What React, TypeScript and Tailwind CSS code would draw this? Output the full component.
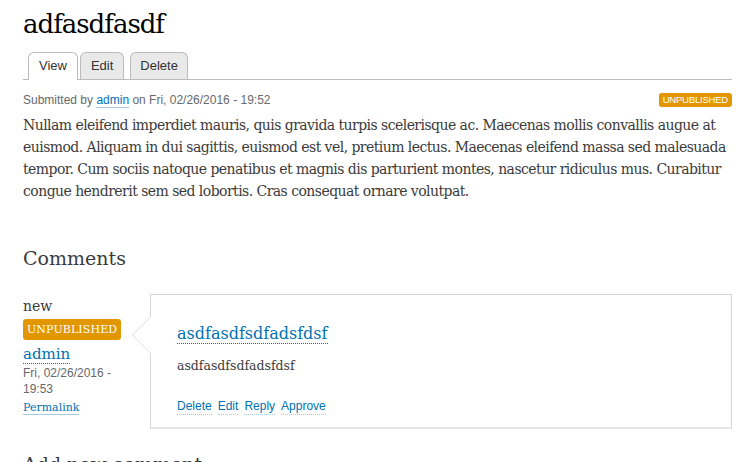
export default function App() {
  const serif = "font-['DejaVu_Serif',serif]";
  const sans = "font-['Liberation_Sans',Arial,sans-serif]";
  return (
    <div className={`min-h-[462px] bg-white pl-[23px] pr-[10px] pt-[4px] text-[#3b3b3b] ${serif}`}>
      <h1 className="text-[26px] leading-[40px] text-[#000] tracking-[-1px]">adfasdfasdf</h1>

      {/* Tabs */}
      <div className={`mt-[8px] flex items-end border-b border-[#bbb] pl-[5px] ${sans} text-[13px]`}>
        <span className="-mb-px rounded-t-[6px] border border-b-0 border-[#bbb] bg-white px-[10px] pb-[4px] pt-[3px] leading-[20px] text-[#333]">View</span>
        <span className="ml-[2px] rounded-t-[6px] border border-b-0 border-[#bbb] bg-[#e9e9e9] px-[10px] pb-[3px] pt-[3px] leading-[20px] text-[#333]">Edit</span>
        <span className="ml-[6px] rounded-t-[6px] border border-b-0 border-[#bbb] bg-[#e9e9e9] px-[9px] pb-[3px] pt-[3px] leading-[20px] text-[#333]">Delete</span>
      </div>

      {/* Meta */}
      <div className={`mt-[11px] flex items-center justify-between ${sans} text-[12px] text-[#68696b]`}>
        <span>
          Submitted by <a className="border-b border-[#a6c9e2] text-[#0071b3]">admin</a> on Fri, 02/26/2016 - 19:52
        </span>
        <span className="rounded-[3px] bg-[#e29700] px-[4px] py-[1px] text-[9.5px] leading-[12px] tracking-[-0.2px] text-white">UNPUBLISHED</span>
      </div>

      <p className="mt-[5px] text-[14px] leading-[22px] tracking-[-0.55px] text-[#3b3b3b]">
        Nullam eleifend imperdiet mauris, quis gravida turpis scelerisque ac. Maecenas mollis convallis augue at
        euismod. Aliquam in dui sagittis, euismod est vel, pretium lectus. Maecenas eleifend massa sed malesuada
        tempor. Cum sociis natoque penatibus et magnis dis parturient montes, nascetur ridiculus mus. Curabitur
        congue hendrerit sem sed lobortis. Cras consequat ornare volutpat.
      </p>

      <h2 className="mt-[42px] text-[19px] leading-[28px] text-[#3b3b3b]">Comments</h2>

      {/* Comment */}
      <div className="mt-[22px] flex items-start">
        <div className="w-[127px] shrink-0 pt-[3px]">
          <div className="text-[14px] leading-[18px] text-[#3b3b3b]">new</div>
          <span className="mt-[4px] inline-block rounded-[3px] bg-[#e29700] px-[4px] pt-[3px] pb-[2px] text-[11px] leading-[16px] tracking-[0.1px] text-white">
            UNPUBLISHED
          </span>
          <div className="mt-[4px] leading-[20px]">
            <a className="border-b border-dotted border-[#0071b3] text-[15px] text-[#0071b3]">admin</a>
          </div>
          <div className={`mt-[1px] ${sans} text-[12px] leading-[16px] text-[#68696b]`}>
            Fri, 02/26/2016 -<br />19:53
          </div>
          <div className="mt-[1px] leading-[15px]">
            <a className="border-b border-[#a6c9e2] text-[11px] text-[#0071b3]">Permalink</a>
          </div>
        </div>

        <div className="relative h-[135px] flex-1 border border-b-2 border-[#d3d7d9] border-b-[#e4e6e6] bg-white pl-[26px] pt-[28px]">
          <div className="absolute left-[-19px] top-[21px] h-0 w-0 border-y-[19px] border-r-[19px] border-y-transparent border-r-[#dcdfe0]" />
          <div className="absolute left-[-18px] top-[21px] h-0 w-0 border-y-[19px] border-r-[19px] border-y-transparent border-r-white" />
          <div className="leading-[22px]">
            <a className="border-b border-dotted border-[#0071b3] text-[16px] text-[#0071b3]">asdfasdfsdfadsfdsf</a>
          </div>
          <p className="mt-[12px] text-[12.5px] leading-[18px] text-[#3b3b3b]">asdfasdfsdfadsfdsf</p>
          <div className={`mt-[23px] flex gap-[6px] ${sans} text-[12px] leading-[16px]`}>
            {['Delete', 'Edit', 'Reply', 'Approve'].map(l => (
              <a key={l} className="border-b border-dotted border-[#a6c9e2] text-[#0071b3]">{l}</a>
            ))}
          </div>
        </div>
      </div>

      <h2 className="mt-[21px] text-[19px] leading-[28px] text-[#3b3b3b]">Add new comment</h2>
    </div>
  );
}
